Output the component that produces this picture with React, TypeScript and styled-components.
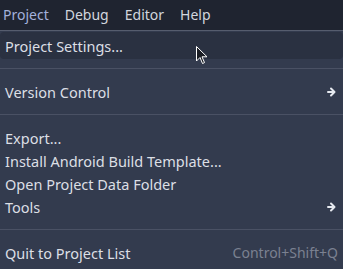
import React from "react";
import styled, { createGlobalStyle } from "styled-components";

const Global = createGlobalStyle`
  html, body { margin: 0; padding: 0; background: #333b4e; overflow: hidden; }
  body { font-family: "Noto Sans", "DejaVu Sans", sans-serif; }
`;

const Root = styled.div`
  width: 343px;
  height: 269px;
  position: relative;
  background: #333b4e;
  font-size: 14px;
`;

const MenuBar = styled.div`
  height: 30px;
  background: #1f2430;
  display: flex;
  align-items: center;
  padding-left: 3px;
  gap: 16px;
  box-sizing: border-box;
`;

const MenuTitle = styled.span<{ $active?: boolean }>`
  color: ${(p) => (p.$active ? "#a3b1dc" : "#d2d6de")};
  padding-bottom: 2px;
`;

const Panel = styled.div`
  border-top: 1px solid #565d6e;
  padding: 3px 2px 0 2px;
  background: #333b4e;
`;

const Row = styled.div<{ $hover?: boolean }>`
  height: 23px;
  display: flex;
  align-items: center;
  justify-content: space-between;
  padding: 0 5px 0 3px;
  color: #dcdfe5;
  font-size: 14.5px;
  background: ${(p) => (p.$hover ? "#2a3141" : "transparent")};
  box-shadow: ${(p) => (p.$hover ? "0 0 0 2px #2a3141" : "none")};
  border-radius: 2px;
`;

const Shortcut = styled.span`
  color: #7b8191;
  font-size: 14px;
  margin-right: -2px;
`;

const Separator = styled.div`
  height: 23px;
  display: flex;
  align-items: center;
  margin: 0 -2px;
  &::after {
    content: "";
    flex: 1;
    height: 1px;
    background: #4a5164;
  }
`;

const Cursor = styled.svg`
  position: absolute;
  left: 196px;
  top: 46px;
`;

const Arrow = () => (
  <svg width="9" height="10" viewBox="0 0 9 10">
    <path d="M1 5 H7 M4 1.5 L7.5 5 L4 8.5" stroke="#e6e9ef" strokeWidth="2" fill="none" strokeLinecap="round" strokeLinejoin="round" />
  </svg>
);

export default function App() {
  return (
    <Root>
      <Global />
      <MenuBar>
        <MenuTitle $active>Project</MenuTitle>
        <MenuTitle>Debug</MenuTitle>
        <MenuTitle>Editor</MenuTitle>
        <MenuTitle>Help</MenuTitle>
      </MenuBar>
      <Panel>
        <Row $hover>Project Settings...</Row>
        <Separator />
        <Row>
          Version Control
          <Arrow />
        </Row>
        <Separator />
        <Row>Export...</Row>
        <Row>Install Android Build Template...</Row>
        <Row>Open Project Data Folder</Row>
        <Row>
          Tools
          <Arrow />
        </Row>
        <Separator />
        <Row>
          Quit to Project List
          <Shortcut>Control+Shift+Q</Shortcut>
        </Row>
      </Panel>
      <Cursor width="13" height="20" viewBox="0 0 13 20">
        <path d="M0.5 0.5 L0.5 15 L4 11.5 L6.5 17.5 L8.5 16.6 L6 10.8 L11 10.8 Z" fill="#1a1d24" stroke="#ffffff" strokeWidth="1" strokeLinejoin="round" />
      </Cursor>
    </Root>
  );
}
